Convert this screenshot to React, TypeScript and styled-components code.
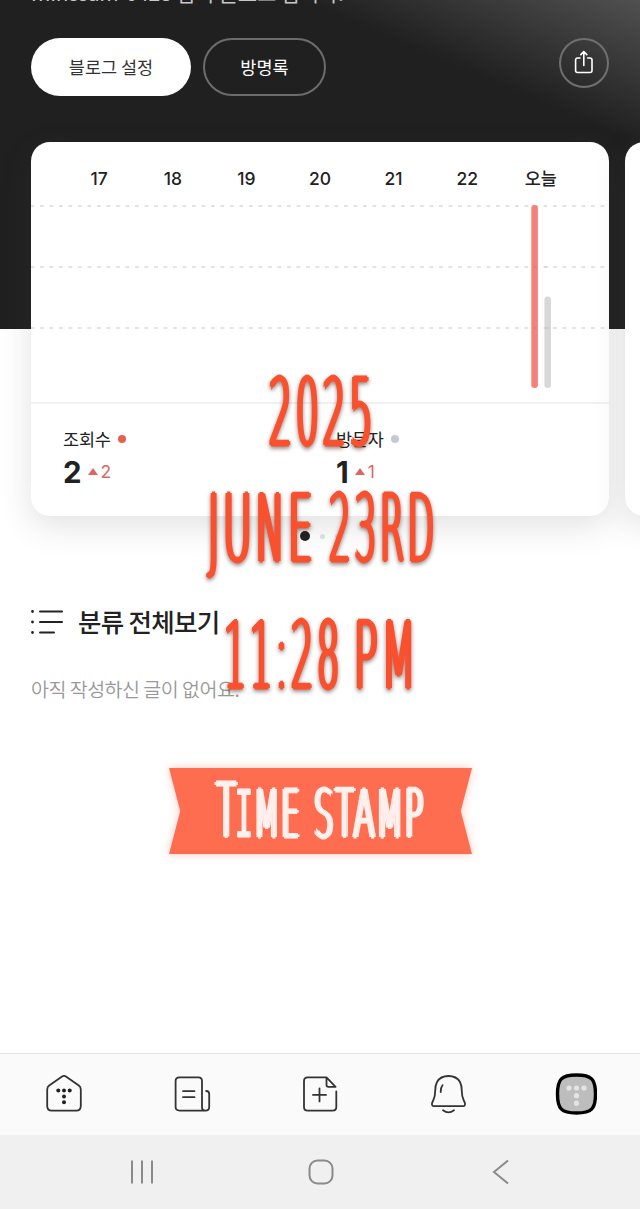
import React from "react";
import styled, { createGlobalStyle } from "styled-components";

const Global = createGlobalStyle`
  * { box-sizing: border-box; }
  body {
    margin: 0;
    background: #fff;
    color: #222;
    font-family: Inter, "Noto Sans CJK KR", sans-serif;
  }
  svg { display: block; }
`;

const Page = styled.div`
  position: relative;
  display: flex;
  flex-direction: column;
  width: 640px;
  height: 1209px;
  overflow: hidden;
  background: #fff;
`;

const Hero = styled.header`
  flex: none;
  height: 329px;
  padding: 0 31px;
  overflow: hidden;
  background: linear-gradient(23deg, #202020 0 76%, #3a3a3a 89%, #505050 100%);
`;

const Intro = styled.p`
  margin: -22px 0 0;
  height: 29px;
  line-height: 29px;
  font-family: "Noto Sans CJK KR", sans-serif;
  font-size: 21px;
  letter-spacing: -0.2px;
  color: #c8c8c8;
  white-space: nowrap;
`;

const Actions = styled.div`
  display: flex;
  align-items: center;
  gap: 12px;
  margin-top: 31px;
  height: 58px;
`;

const Pill = styled.button<{ $filled?: boolean; $width: number }>`
  width: ${(p) => p.$width}px;
  height: 58px;
  padding: 0 0 2px;
  border-radius: 29px;
  border: ${(p) => (p.$filled ? "0" : "2px solid #6c6c6c")};
  background: ${(p) => (p.$filled ? "#fff" : "transparent")};
  color: ${(p) => (p.$filled ? "#333" : "#fff")};
  font-family: "Noto Sans CJK KR", sans-serif;
  font-size: 17.5px;
  letter-spacing: 0;
`;

const RoundButton = styled.button`
  display: grid;
  place-items: center;
  width: 50px;
  height: 50px;
  margin: -8px 0 0 auto;
  padding: 0;
  border: 2px solid #707070;
  border-radius: 50%;
  background: transparent;
`;

const Carousel = styled.section`
  display: flex;
  flex: none;
  gap: 16px;
  margin-top: -187px;
  padding-left: 31px;
`;

const Card = styled.article`
  flex: none;
  width: 578px;
  height: 374px;
  border-radius: 19px;
  background: #fff;
  box-shadow: 0 10px 32px rgba(72, 72, 72, 0.16);
`;

const Days = styled.div`
  display: grid;
  grid-template-columns: repeat(7, 73.6px);
  justify-content: center;
  height: 63px;
  padding-top: 25px;
  line-height: 24px;
  text-align: center;
  font-size: 17.5px;
  font-weight: 500;
`;

const Stats = styled.div`
  display: grid;
  grid-template-columns: 273px 1fr;
  height: 113px;
  padding: 22px 32px 0;
  border-top: 2px solid #f1f1f1;
`;

const StatLabel = styled.div`
  display: flex;
  align-items: center;
  gap: 7px;
  height: 26px;
  font-family: "Noto Sans CJK KR", sans-serif;
  font-size: 17.5px;
  letter-spacing: -0.2px;

  span { margin-top: -2px; }
`;

const Dot = styled.i<{ $color: string; $size: number }>`
  width: ${(p) => p.$size}px;
  height: ${(p) => p.$size}px;
  border-radius: 50%;
  background: ${(p) => p.$color};
`;

const StatValue = styled.div`
  display: flex;
  align-items: center;
  gap: 2.5px;
  height: 39px;
  color: #df6660;
  font-size: 17.5px;

  b {
    margin-right: 4px;
    color: #222;
    font-size: 29.5px;
    font-weight: 700;
  }
`;

const Pager = styled.div`
  display: flex;
  flex: none;
  align-items: center;
  justify-content: center;
  gap: 10px;
  height: 40px;
`;

const CategoryRow = styled.h2`
  display: flex;
  align-items: center;
  gap: 15px;
  margin: 44px 0 0;
  padding-left: 31px;
  height: 40px;
  font-family: "Noto Sans CJK KR", sans-serif;
  font-size: 25.5px;
  font-weight: 500;
  letter-spacing: -0.7px;

  svg { margin-top: 4px; }
`;

const Empty = styled.p`
  margin: 34px 0 0;
  padding-left: 31px;
  line-height: 30px;
  font-family: "Noto Sans CJK KR", sans-serif;
  font-size: 19.5px;
  font-weight: 350;
  letter-spacing: -0.5px;
  color: #999;
`;

const TabBar = styled.nav`
  display: grid;
  flex: none;
  grid-template-columns: repeat(5, 128px);
  place-items: center;
  height: 82px;
  margin-top: auto;
  padding-bottom: 1px;
  border-top: 1px solid #e4e4e4;
  background: #fafafa;
`;

const SystemBar = styled.div`
  display: flex;
  flex: none;
  align-items: center;
  justify-content: center;
  gap: 153.5px;
  height: 74px;
  padding-left: 1px;
  background: #f0f0f0;
`;

const Stamp = styled.div`
  position: absolute;
  inset: 0;
  pointer-events: none;
  filter: drop-shadow(0 2px 2px rgba(60, 30, 20, 0.55));
`;

const StampWord = styled.span<{ $x: number; $base: number; $sx: number; $size?: number }>`
  position: absolute;
  left: ${(p) => p.$x}px;
  top: ${(p) => p.$base - 64 - 0.346 * (p.$size ?? 93)}px;
  line-height: 128px;
  font-family: "DejaVu Sans", sans-serif;
  font-size: ${(p) => p.$size ?? 93}px;
  font-weight: 200;
  letter-spacing: 10px;
  color: #f9512f;
  white-space: nowrap;
  transform: scaleX(${(p) => p.$sx});
  transform-origin: 0 0;
  -webkit-text-stroke: 3px currentColor;
  text-shadow: 2px 0, -2px 0, 5px 0, -5px 0;
`;

const Ribbon = styled.div`
  position: absolute;
  left: 169px;
  top: 768px;
  width: 303px;
  height: 86px;
  filter: drop-shadow(0 0 4px rgba(255, 110, 80, 0.4));
`;

const RibbonFace = styled.div`
  position: relative;
  height: 100%;
  background: #ff6d50;
  clip-path: polygon(0 0, 100% 0, 96.3% 50%, 100% 100%, 0 100%, 3.7% 50%);
`;

const RibbonWord = styled(StampWord)`
  color: #fff0ed;
  letter-spacing: 4px;

  big { font-size: 75px; line-height: 0; letter-spacing: -2px; }
  i {
    margin: 0 -1px;
    font-family: "DejaVu Sans Mono", monospace;
    font-style: normal;
    line-height: 0;
    -webkit-text-stroke-width: 1px;
    text-shadow: 2px 0, -2px 0;
  }
`;

const days = ["17", "18", "19", "20", "21", "22", "오늘"];

const ShareIcon = () => (
  <svg width="20" height="26" viewBox="0 0 20 26" fill="none" stroke="#fff" strokeWidth="1.6" strokeLinecap="round" strokeLinejoin="round">
    <path d="M6 8H3.5Q1.6 8 1.6 10V20.500Q1.600 22.500 3.500 22.500H16Q18 22.500 18 20.500V10Q18 8 16 8H13.600M9.800 15.500V2M6.800 4.600 9.800 1.600 12.800 4.600" />
  </svg>
);

const Chart = () => (
  <svg width="578" height="197" viewBox="0 0 578 197">
    {[1, 62, 123].map((y) => (
      <path key={y} d={`M0 ${y}H575`} stroke="#dadada" strokeWidth="1.6" strokeDasharray="3.8 5.7" strokeDashoffset="0.5" />
    ))}
    <rect x="500.300" y="0" width="6.600" height="183" rx="3.300" fill="#f5827a" />
    <rect x="513.400" y="91.500" width="6.600" height="91.500" rx="3.300" fill="#d8d8d8" />
    {[62, 123].map((y) => (
      <path key={y} d={`M502 ${y}H505M514 ${y}H518`} stroke="#00000012" strokeWidth="1.600" />
    ))}
  </svg>
);

const Stat = ({ label, color, value }: { label: string; color: string; value: number }) => (
  <div>
    <StatLabel><span>{label}</span><Dot $color={color} $size={8} /></StatLabel>
    <StatValue>
      <b>{value}</b>
      <svg width="10" height="7" viewBox="0 0 10 7"><path d="M5 0 10 7H0Z" fill="#df6660" /></svg>
      {value}
    </StatValue>
  </div>
);

const ListIcon = () => (
  <svg width="32" height="24" viewBox="0 0 32 24" stroke="#222" strokeWidth="2" strokeLinecap="round">
    <path d="M9 1.500H31M9 12H31M9 22.500H23" />
    <path d="M1.500 1.500v0M1.500 12v0M1.500 22.500v0" strokeWidth="2.800" />
  </svg>
);

const line = { fill: "none", stroke: "#333", strokeWidth: 1.8, strokeLinecap: "round", strokeLinejoin: "round" } as const;

const HomeIcon = () => (
  <svg width="40" height="42" viewBox="0 0 40 42" {...line}>
    <path d="M3.200 16.500Q3.200 14 5.200 12.600L17.700 3.700Q20 2.200 22.300 3.700L34.800 12.600Q36.800 14 36.800 16.500V33Q36.800 37.600 32.300 37.600H7.700Q3.200 37.600 3.200 33Z" />
    <g fill="#222" stroke="none">
      <circle cx="14.300" cy="17.500" r="2" /><circle cx="20" cy="17.500" r="2" /><circle cx="25.700" cy="17.500" r="2" />
      <circle cx="20" cy="23.400" r="2" /><circle cx="20" cy="29.200" r="2" />
    </g>
  </svg>
);

const FeedIcon = () => (
  <svg width="40" height="42" viewBox="0 0 40 42" {...line}>
    <path d="M33.500 37.600H7.500Q3.600 37.600 3.600 34V8Q3.600 4.400 7.500 4.400H26.500Q30 4.400 30 8V34.500Q30 37.600 33.500 37.600Q37.200 37.600 37.200 34V21Q37.200 18 34.200 18" />
    <path d="M11 18.100H22.500M11 24.200H22.500" />
  </svg>
);

const WriteIcon = () => (
  <svg width="40" height="42" viewBox="0 0 40 42" {...line}>
    <path d="M36.300 18.500V34Q36.300 37.600 32.600 37.600H7.700Q4 37.600 4 34V8Q4 4.400 7.700 4.400H26.500L35.600 13.800H28.500Q26.500 13.800 26.500 12V4.400" />
    <path d="M13 21.900H26M19.500 15.400V28.400" />
  </svg>
);

const BellIcon = () => (
  <svg width="40" height="42" viewBox="-0.5 0 40 42" {...line}>
    <path d="M20 3Q12 3 8.500 9Q6.700 12.500 6.700 18Q6.700 23.500 4.700 27.500L3.600 29.800Q2.900 33.200 5.500 33.200H34.500Q37.100 33.200 36.400 29.800L35.300 27.500Q33.300 23.500 33.300 18Q33.300 12.500 31.500 9Q28 3 20 3Z" />
    <path d="M14 12.300Q12.200 14.500 12.200 19M14.500 37.200Q20 41.500 25.500 37.200" />
  </svg>
);

const ProfileIcon = () => (
  <svg width="42" height="42" viewBox="-0.5 0 42 42">
    <path d="M21 2C36 2 40 6 40 21S36 40 21 40 2 36 2 21 6 2 21 2Z" fill="#bdbdbd" stroke="#000" strokeWidth="3.400" />
    <g fill="#e4e4e4">
      <circle cx="13.500" cy="15" r="2.600" /><circle cx="21" cy="15" r="2.600" /><circle cx="28.500" cy="15" r="2.600" />
      <circle cx="21" cy="22.700" r="2.600" /><circle cx="21" cy="30.200" r="2.600" />
    </g>
  </svg>
);

export default function App() {
  return (
    <>
      <Global />
      <Page>
        <Hero>
          <Intro>minssam-0428 님의 블로그 입니다.</Intro>
          <Actions>
            <Pill $filled $width={160}>블로그 설정</Pill>
            <Pill $width={123}>방명록</Pill>
            <RoundButton aria-label="공유"><ShareIcon /></RoundButton>
          </Actions>
        </Hero>
        <Carousel>
          <Card>
            <Days>{days.map((d) => <span key={d}>{d}</span>)}</Days>
            <Chart />
            <Stats>
              <Stat label="조회수" color="#e5604f" value={2} />
              <Stat label="방문자" color="#c5c9d6" value={1} />
            </Stats>
          </Card>
          <Card />
        </Carousel>
        <Pager>
          <Dot $color="#222" $size={10} />
          <Dot $color="#dcdcdc" $size={5} />
          <Dot $color="#dcdcdc" $size={5} />
        </Pager>
        <CategoryRow><ListIcon />분류 전체보기</CategoryRow>
        <Empty>아직 작성하신 글이 없어요.</Empty>
        <TabBar>
          <HomeIcon />
          <FeedIcon />
          <WriteIcon />
          <BellIcon />
          <ProfileIcon />
        </TabBar>
        <SystemBar>
          <svg width="26" height="26" viewBox="0 0 26 26" stroke="#8a8a8a" strokeWidth="2"><path d="M4 1.500V24.500M14 1.500V24.500M24 1.500V24.500" /></svg>
          <svg width="26" height="26" viewBox="0 0 26 26" fill="none" stroke="#8a8a8a" strokeWidth="2"><rect x="1.500" y="1.500" width="23" height="23" rx="8" /></svg>
          <svg width="26" height="26" viewBox="0 0 26 26" fill="none" stroke="#8a8a8a" strokeWidth="2"><path d="M21 1.500 7 13 21 24.500" /></svg>
        </SystemBar>
        <Stamp>
          <StampWord $x={269} $base={445} $sx={0.388}>2025</StampWord>
          <StampWord $x={208} $base={561} $sx={0.412}>JUNE</StampWord>
          <StampWord $x={329} $base={561} $sx={0.369}>23RD</StampWord>
          <StampWord $x={224} $base={688} $sx={0.374}>11:28</StampWord>
          <StampWord $x={354} $base={688} $sx={0.42}>PM</StampWord>
        </Stamp>
        <Ribbon>
          <RibbonFace>
            <RibbonWord $x={47} $base={70} $sx={0.445} $size={66}><big>T</big><i>I</i>ME</RibbonWord>
            <RibbonWord $x={145} $base={70} $sx={0.465} $size={66}>STAMP</RibbonWord>
          </RibbonFace>
        </Ribbon>
      </Page>
    </>
  );
}
